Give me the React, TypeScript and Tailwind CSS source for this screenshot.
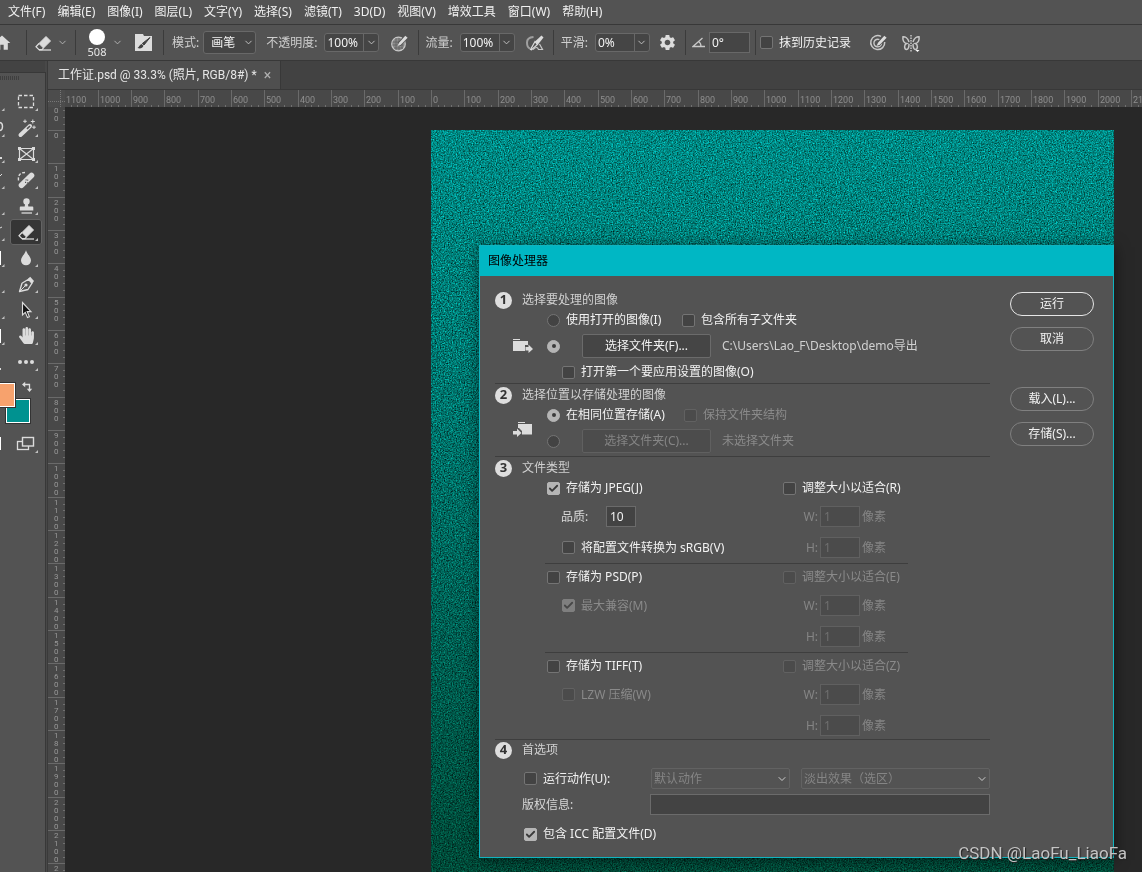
import { useState } from 'react';
import type { ReactNode } from 'react';
import { FaHandPaper } from 'react-icons/fa';
import { MdHome, MdSettings } from 'react-icons/md';
import { Check, ChevronDown } from 'lucide-react';

const menus = [
  '文件(F)',
  '编辑(E)',
  '图像(I)',
  '图层(L)',
  '文字(Y)',
  '选择(S)',
  '滤镜(T)',
  '3D(D)',
  '视图(V)',
  '增效工具',
  '窗口(W)',
  '帮助(H)',
];

/* ---------- Icons ---------- */

function EraserShape() {
  return (
    <>
      <path d="M19 6.5 23.5 11 16.5 18 12 13.5Z" fill="#dcdcdc" stroke="#dcdcdc" strokeLinejoin="round" />
      <path d="M12 13.5 9 16.8 12 19.6H15L16.5 18" fill="none" stroke="#dcdcdc" strokeWidth="1.2" />
      <path d="M12 20H24" stroke="#dcdcdc" strokeWidth="1.3" />
    </>
  );
}

interface Tool {
  name: string;
  icon: ReactNode;
  edge?: ReactNode;
}

const tools: Tool[] = [
  {
    name: '矩形选框',
    icon: <rect x="8.5" y="6.5" width="15" height="12" fill="none" stroke="#dcdcdc" strokeWidth="1.3" strokeDasharray="3.5 2" />,
  },
  {
    name: '魔棒',
    icon: (
      <>
        <path d="M10.5 20 20 11" stroke="#dcdcdc" strokeWidth="4" strokeLinecap="round" />
        <path d="M17 13.8 20 11" stroke="#535353" strokeWidth="1.6" />
        <path d="M15 4.5V8M13.2 6.3H16.8M22.8 4.5V8.5M20.8 6.5H24.8M24 10.5V14M22.2 12.2H25.8" stroke="#dcdcdc" />
      </>
    ),
    edge: <path d="M0 7.5Q2.5 8 2.5 11.5T0 15.5" fill="none" stroke="#dcdcdc" strokeWidth="1.4" />,
  },
  {
    name: '图框',
    icon: (
      <>
        <path d="M9.5 7.5H23.5V18.5H9.5ZM9.5 7.5 23.5 18.5M23.5 7.5 9.5 18.5" fill="none" stroke="#dcdcdc" strokeWidth="1.2" />
        <path d="M8 6h3v3h-3zM22 6h3v3h-3zM8 17h3v3h-3zM22 17h3v3h-3z" fill="#dcdcdc" />
      </>
    ),
    edge: <rect x="0" y="16" width="2" height="2" fill="#dcdcdc" />,
  },
  {
    name: '污点修复画笔',
    icon: (
      <>
        <path d="M8.5 13.5Q7.5 5 16 5.5" fill="none" stroke="#dcdcdc" strokeWidth="1.4" strokeDasharray="3 1.6" />
        <path d="M11.5 18.3 21.5 8.5" stroke="#dcdcdc" strokeWidth="5.6" strokeLinecap="round" />
        <path d="M15 15.4h1M17.2 13.2h1M15.6 12.8h1M16.8 15.8h1" stroke="#535353" strokeWidth="1.2" />
      </>
    ),
    edge: <path d="M0 9 2 7" stroke="#dcdcdc" />,
  },
  {
    name: '仿制图章',
    icon: (
      <>
        <circle cx="16.5" cy="8.5" r="3.2" fill="#dcdcdc" />
        <path d="M15.2 10h2.6l.5 3.5h4.2q.8 0 .8 1v3H9.8v-3q0-1 .8-1h4.1z" fill="#dcdcdc" />
        <path d="M11.5 20H22" stroke="#dcdcdc" strokeWidth="1.3" />
      </>
    ),
  },
  { name: '橡皮擦', icon: <EraserShape />, edge: <path d="M0 9 2 8" stroke="#dcdcdc" /> },
  {
    name: '模糊',
    icon: <path d="M16 5.2C17 9 21 12 21 15.5A5 4.8 0 0 1 11 15.5C11 12 15 9 16 5.2Z" fill="#dcdcdc" />,
    edge: <rect x="0" y="6" width="1" height="14" fill="#ffffff" />,
  },
  {
    name: '钢笔',
    icon: (
      <>
        <path d="M9.5 20.5 12 12.2 18.5 8.2 22 12.2 18 18.5Z" fill="none" stroke="#dcdcdc" strokeWidth="1.3" strokeLinejoin="round" />
        <path d="M18 7.8 20.2 5.8 24 10 22.3 12.4Z" fill="#dcdcdc" />
        <path d="M9.5 20.5 15.5 14.5" stroke="#dcdcdc" />
        <circle cx="16" cy="14" r="1.6" fill="#dcdcdc" />
      </>
    ),
  },
  {
    name: '路径选择',
    icon: <path d="M12.5 5.5V18L15.3 15.4 17.5 20.5 19.4 19.7 17.2 14.6H21Z" fill="#141414" stroke="#dcdcdc" strokeWidth="1.1" />,
  },
  {
    name: '抓手',
    icon: <FaHandPaper x="8" y="4" width="17" height="17" size={17} color="#dcdcdc" />,
    edge: <rect x="0" y="6" width="1" height="14" fill="#ffffff" />,
  },
  {
    name: '编辑工具栏',
    icon: (
      <>
        <circle cx="10" cy="13" r="2" fill="#dcdcdc" />
        <circle cx="16" cy="13" r="2" fill="#dcdcdc" />
        <circle cx="22" cy="13" r="2" fill="#dcdcdc" />
      </>
    ),
    edge: <rect x="0" y="19" width="1" height="2" fill="#dcdcdc" />,
  },
];

function ToolButton({ name, icon, edge, active = false, onClick }: Tool & { active?: boolean; onClick?: () => void }) {
  return (
    <div className="flex h-[26px]">
      <svg width="10" height="26" viewBox="0 0 10 26" className="shrink-0" aria-hidden="true">
        {edge}
        {name !== '编辑工具栏' && name !== '屏幕模式' && <path d="M4.5 19v3h-3z" fill="#c0c0c0" />}
      </svg>
      <button
        type="button"
        aria-label={name}
        onClick={onClick}
        className={`shrink-0 rounded-[3px] ${active ? 'bg-[#353535] ring-1 ring-[#636363] ring-inset' : ''}`}
      >
        <svg width="32" height="26" viewBox="0 0 32 26" aria-hidden="true">
          {icon}
          <path d="M28 19v3h-3z" fill="#c0c0c0" />
        </svg>
      </button>
    </div>
  );
}

function PressureIcon({ rings = false }: { rings?: boolean }) {
  return (
    <svg width="20" height="20" viewBox="0 0 20 20" fill="none" aria-hidden="true">
      {rings ? (
        <>
          <path d="M12 3.4A7 7 0 1 0 15.7 9" stroke="#c8c8c8" strokeWidth="1.5" />
          <path d="M10.5 6.7A3.8 3.8 0 1 0 12.5 10" stroke="#c8c8c8" strokeWidth="1.4" />
        </>
      ) : (
        <>
          <circle cx="8.5" cy="11" r="6.8" fill="#8b8b8b" stroke="#c8c8c8" strokeWidth="1.2" />
          <path d="M3 9h10M2.5 12h11M4 15h9M6 5v12M9 5v12M12 8v8" stroke="#606060" strokeWidth="0.8" />
        </>
      )}
      <path d="M9 11.5 16.5 3.5" stroke="#535353" strokeWidth="4.4" />
      <path d="M7.5 13 9 9.8 15.3 2.7 17.6 4.8 10.8 11.7Z" fill="#dcdcdc" />
    </svg>
  );
}

function AirbrushIcon() {
  return (
    <svg width="20" height="20" viewBox="0 0 20 20" fill="none" aria-hidden="true">
      <path d="M8.5 4Q2 4.5 2 9.5T5 15.5" stroke="#a0a0a0" strokeWidth="2" />
      <path d="M5.5 16.5 10 8.5 12.5 11.5 6.5 16.8Z" stroke="#dcdcdc" strokeWidth="1.2" />
      <path d="M10 8.5 16.5 2.5 18.5 4.5 13 11.5Z" fill="#dcdcdc" />
      <path d="M8 16.5Q12 12.5 13.5 16.5H17.5L14.5 11" stroke="#c8c8c8" strokeWidth="1.2" />
    </svg>
  );
}

function ButterflyIcon() {
  return (
    <svg width="20" height="20" viewBox="0 0 20 20" fill="none" stroke="#c8c8c8" strokeWidth="1.5" aria-hidden="true">
      <path d="M8 9C7 5 4 3.5 2 3.7 1.5 6.5 2.5 10 5.5 10.5 3 11.5 3 16 5.5 16.5 8 16.3 8 13.5 8 11" />
      <path d="M12 9C13 5 16 3.5 18 3.7 18.5 6.5 17.5 10 14.5 10.5 17 11.5 17 16 14.5 16.5 12 16.3 12 13.5 12 11" />
      <path d="M10 2V19" stroke="#ffffff" strokeWidth="1" strokeDasharray="1.5 1" />
      <path d="M14.5 17h4l-2 2z" fill="#ffffff" stroke="none" />
    </svg>
  );
}

/* ---------- Form controls ---------- */

interface ChoiceProps {
  label: string;
  type?: 'checkbox' | 'radio';
  name?: string;
  defaultChecked?: boolean;
  disabled?: boolean;
  className?: string;
}

function Choice({ label, type = 'checkbox', name, defaultChecked, disabled, className = '' }: ChoiceProps) {
  return (
    <label
      className={`flex shrink-0 items-center gap-[6px] whitespace-nowrap ${disabled ? 'text-[#8a8a8a]' : 'text-[#f2f2f2]'} ${className}`}
    >
      <span className={`grid place-items-center ${disabled ? 'opacity-45' : ''}`}>
        <input
          type={type}
          name={name}
          aria-label={label || '选择文件夹'}
          defaultChecked={defaultChecked}
          disabled={disabled}
          className={`peer col-start-1 row-start-1 size-[13px] appearance-none border border-[#747474] bg-[#434343] checked:border-[#b5b5b5] checked:bg-[#b5b5b5] ${
            type === 'radio' ? 'rounded-full' : 'rounded-[2px]'
          }`}
        />
        {type === 'radio' ? (
          <span className="pointer-events-none invisible col-start-1 row-start-1 size-1 rounded-full bg-[#3a3a3a] peer-checked:visible" />
        ) : (
          <Check
            size={11}
            strokeWidth={4}
            className="pointer-events-none invisible col-start-1 row-start-1 text-[#3a3a3a] peer-checked:visible"
          />
        )}
      </span>
      {label && <span>{label}</span>}
    </label>
  );
}

function PercentField({ label, value }: { label: string; value: string }) {
  return (
    <label className="flex items-center gap-[7px]">
      <span className="whitespace-nowrap text-[#cfcfcf]">{label}:</span>
      <span className="flex h-[19px] items-stretch rounded-[3px] border border-[#686868] bg-[#454545]">
        <input defaultValue={value} className="w-[38px] bg-transparent pl-[2px] text-[#f2f2f2] outline-none" />
        <span className="flex w-[15px] items-center justify-center border-l border-[#686868]">
          <ChevronDown size={11} className="text-[#c8c8c8]" />
        </span>
      </span>
    </label>
  );
}

function PresetSelect({ label, value, className }: { label: string; value: string; className: string }) {
  return (
    <span className={`grid items-center ${className}`}>
      <select
        aria-label={label}
        disabled
        className="col-start-1 row-start-1 h-[21px] w-full appearance-none rounded-[2px] border border-[#626262] bg-transparent pl-[2px] text-[#858585] opacity-100"
      >
        <option>{value}</option>
      </select>
      <ChevronDown size={12} className="pointer-events-none col-start-1 row-start-1 mr-[2px] justify-self-end text-[#d0d0d0]" />
    </span>
  );
}

function Divider() {
  return <span className="h-[25px] w-px shrink-0 bg-[#3b3b3b]" />;
}

/* ---------- Rulers ---------- */

// one mark per 100px of the document, 0 sits on the artwork's corner
const range = (from: number, to: number) => Array.from({ length: to - from + 1 }, (_, i) => from + i);
const columns = range(-11, 21);
const rows = range(-1, 22);
const offset = (mark: number) => Math.round((mark * 100) / 3);

function HorizontalRuler() {
  return (
    <svg className="h-[17px] w-full bg-[#484848]" aria-hidden="true">
      {columns.map((m) => {
        const x = 366 + offset(m);
        return (
          <g key={m} className="fill-[#8e8e8e]">
            <rect x={x} y="0" width="1" height="17" fill="#6a6a6a" />
            {[1, 2, 3, 4].map((t) => (
              <rect key={t} x={x + Math.round(t * 6.67)} y="15" width="1" height="2" fill="#707070" />
            ))}
            <text x={x + 2} y="13" className="font-['Roboto',sans-serif] text-[9px]">
              {Math.abs(m * 100)}
            </text>
          </g>
        );
      })}
    </svg>
  );
}

function VerticalRuler() {
  return (
    <svg className="h-full w-[17px] shrink-0 bg-[#484848]" aria-hidden="true">
      {rows.map((m) => {
        const y = 23 + offset(m);
        const digits = String(Math.abs(m * 100)).split('');
        return (
          <g key={m} className="fill-[#989898]">
            <rect x="0" y={y} width="17" height="1" fill="#6a6a6a" />
            {[1, 2, 3, 4].map((t) => (
              <rect key={t} x="15" y={y + Math.round(t * 6.67)} width="2" height="1" fill="#707070" />
            ))}
            {digits.map((digit, i) => (
              <text key={i} x="6" y={y + 8 + i * 8} className="font-['Roboto',sans-serif] text-[8px]">
                {m < 0 && i === 0 ? '' : digit}
              </text>
            ))}
          </g>
        );
      })}
    </svg>
  );
}

/* ---------- Canvas artwork ---------- */

function Artwork() {
  return (
    <svg className="absolute top-[23px] right-7 bottom-0 left-[366px] h-[calc(100%-23px)] w-[calc(100%-394px)]" aria-hidden="true">
      <defs>
        <linearGradient id="teal" x1="0" y1="0" x2="0" y2="1">
          <stop offset="0" stopColor="#008b86" />
          <stop offset="0.3" stopColor="#007a73" />
          <stop offset="1" stopColor="#004a38" />
        </linearGradient>
        <filter id="grain" x="0" y="0" width="100%" height="100%" colorInterpolationFilters="sRGB">
          <feTurbulence type="fractalNoise" baseFrequency="0.75" numOctaves="2" seed="4" />
          <feColorMatrix values="1 0 0 0 -0.01  1 0 0 0 -0.01  1 0 0 0 -0.01  0 0 0 0 1" />
        </filter>
      </defs>
      <rect width="100%" height="100%" fill="url(#teal)" />
      <rect width="100%" height="100%" filter="url(#grain)" className="mix-blend-overlay" />
    </svg>
  );
}

/* ---------- Dialog ---------- */

function StepTitle({ step, title }: { step: number; title: string }) {
  return (
    <h2 className="flex h-5 items-center gap-[10px] text-[#d0d0d0]">
      <span className="flex size-[17px] items-center justify-center rounded-full bg-[#dedede] text-[13px] font-bold text-[#333333]">
        {step}
      </span>
      {title}
    </h2>
  );
}

function FolderIcon({ direction }: { direction: 'out' | 'in' }) {
  return (
    <svg width="20" height="16" viewBox="0 0 20 16" fill="#dcdcdc" className="shrink-0" aria-hidden="true">
      {direction === 'out' ? (
        <>
          <path d="M0 1h7v1H0zM0 3h15v4h-3v6H0z" />
          <path d="M12.5 9h3V6.5l4.5 4.5-4.5 4v-2.5h-3z" />
        </>
      ) : (
        <>
          <path d="M5 1h7v1H5zM5 3h14v10.500H9V10L6 7H5z" />
          <path d="M0 10h4V7.500l4.500 4.500-4.500 4v-2.500H0z" />
        </>
      )}
    </svg>
  );
}

function SizeRow({ label, id }: { label: string; id: string }) {
  return (
    <div className="flex h-[21px] items-center gap-[2px] text-[#858585]">
      <label htmlFor={id} className="w-[35px] text-right">
        {label}:
      </label>
      <input
        id={id}
        disabled
        defaultValue="1"
        className="h-[21px] w-10 border border-[#606060] bg-[#4b4b4b] pl-[3px] text-[#707070]"
      />
      <span>像素</span>
    </div>
  );
}

interface FormatBlockProps {
  id: string;
  format: ReactNode;
  resize: string;
  resizeDisabled?: boolean;
  children: ReactNode;
  className?: string;
}

function FormatBlock({ id, format, resize, resizeDisabled, children, className = '' }: FormatBlockProps) {
  return (
    <div className={`mr-[82px] ml-[50px] flex justify-between pl-[2px] ${className}`}>
      <div>
        <div className="flex h-5 items-center">{format}</div>
        {children}
      </div>
      <div className="w-[125px]">
        <Choice label={resize} disabled={resizeDisabled} className="h-5" />
        <div className="mt-2 space-y-[10px]">
          <SizeRow label="W" id={`${id}-w`} />
          <SizeRow label="H" id={`${id}-h`} />
        </div>
      </div>
    </div>
  );
}

function PillButton({ children, primary = false }: { children: ReactNode; primary?: boolean }) {
  return (
    <button
      type="button"
      className={`h-6 w-full rounded-full border text-[#f2f2f2] ${primary ? 'border-[#e6e6e6]' : 'border-[#808080]'}`}
    >
      {children}
    </button>
  );
}

function ImageProcessorDialog() {
  return (
    <div
      role="dialog"
      aria-label="图像处理器"
      className="absolute top-[138px] right-7 left-[414px] border border-[#10b4c0] bg-[#535353] shadow-[0_2px_14px_rgba(0,0,0,0.55)]"
    >
      <div className="flex h-[30px] items-center bg-[#00b7c4] pl-2 text-black">图像处理器</div>
      <div className="flex gap-5 pr-[19px] pl-[15px]">
        <form className="min-w-0 flex-1 pt-[14px] pb-[13px]">
          <section>
            <StepTitle step={1} title="选择要处理的图像" />
            <div className="flex h-5 items-center pl-[52px]">
              <Choice type="radio" name="source" label="使用打开的图像(I)" className="w-[135px]" />
              <Choice label="包含所有子文件夹" />
            </div>
            <div className="my-1 flex h-6 items-center pl-[18px]">
              <FolderIcon direction="out" />
              <Choice type="radio" name="source" label="" defaultChecked className="ml-[14px]" />
              <button type="button" className="ml-[22px] h-6 w-[129px] rounded-[2px] border border-[#6b6b6b] bg-[#454545] text-[#f2f2f2]">
                选择文件夹(F)...
              </button>
              <span className="ml-[11px] whitespace-nowrap text-[#d0d0d0]">C:\Users\Lao_F\Desktop\demo导出</span>
            </div>
            <Choice label="打开第一个要应用设置的图像(O)" className="h-5 pl-[67px]" />
          </section>

          <section className="mt-px border-t border-[#3e3e3e] pt-px">
            <StepTitle step={2} title="选择位置以存储处理的图像" />
            <div className="flex items-center gap-[14px] pl-[18px]">
              <FolderIcon direction="in" />
              <div>
                <div className="flex h-5 items-center">
                  <Choice type="radio" name="target" label="在相同位置存储(A)" defaultChecked className="w-[137px]" />
                  <Choice label="保持文件夹结构" disabled />
                </div>
                <div className="mt-1 flex h-6 items-center">
                  <Choice type="radio" name="target" label="" />
                  <button
                    type="button"
                    disabled
                    className="ml-[22px] h-6 w-[129px] rounded-[2px] border border-[#606060] bg-[#4c4c4c] text-[#858585]"
                  >
                    选择文件夹(C)...
                  </button>
                  <span className="ml-[11px] text-[#8a8a8a]">未选择文件夹</span>
                </div>
              </div>
            </div>
          </section>

          <section className="mt-[3px] border-t border-[#3e3e3e] pt-px">
            <StepTitle step={3} title="文件类型" />
            <FormatBlock id="jpeg" format={<Choice label="存储为 JPEG(J)" defaultChecked />} resize="调整大小以适合(R)" className="pb-[5px]">
              <label className="mt-2 flex h-[21px] items-center pl-[14px] text-[#d8d8d8]">
                <span className="w-[45px]">品质:</span>
                <input defaultValue="10" className="h-[21px] w-[30px] border border-[#6b6b6b] bg-[#434343] pl-[3px] text-[#f2f2f2]" />
              </label>
              <Choice label="将配置文件转换为 sRGB(V)" className="mt-[10px] h-[21px] pl-[15px]" />
            </FormatBlock>
            <FormatBlock
              id="psd"
              format={<Choice label="存储为 PSD(P)" />}
              resize="调整大小以适合(E)"
              resizeDisabled
              className="border-t border-[#3e3e3e] pt-[3px] pb-[5px]"
            >
              <Choice label="最大兼容(M)" defaultChecked disabled className="mt-2 h-[21px] pl-[15px]" />
            </FormatBlock>
            <FormatBlock
              id="tiff"
              format={<Choice label="存储为 TIFF(T)" />}
              resize="调整大小以适合(Z)"
              resizeDisabled
              className="border-t border-[#3e3e3e] pt-[3px] pb-[3px]"
            >
              <Choice label="LZW 压缩(W)" disabled className="mt-2 h-[21px] pl-[15px]" />
            </FormatBlock>
          </section>

          <section className="border-t border-[#3e3e3e]">
            <StepTitle step={4} title="首选项" />
            <div className="mt-2 flex h-[21px] items-center pl-[29px]">
              <Choice label="运行动作(U):" className="w-[127px]" />
              <PresetSelect label="动作组" value="默认动作" className="w-[139px]" />
              <PresetSelect label="动作" value="淡出效果（选区）" className="ml-[11px] flex-1" />
            </div>
            <label className="mt-[5px] flex h-[21px] items-center pl-[27px] text-[#d8d8d8]">
              <span className="w-[128px]">版权信息:</span>
              <input className="h-[21px] min-w-0 flex-1 border border-[#6b6b6b] bg-[#434343] px-1" />
            </label>
            <Choice label="包含 ICC 配置文件(D)" defaultChecked className="mt-[9px] h-5 pl-[29px]" />
          </section>
        </form>

        <div className="flex w-[84px] shrink-0 flex-col gap-[11px] pt-4">
          <PillButton primary>运行</PillButton>
          <PillButton>取消</PillButton>
          <div className="mt-[25px] flex flex-col gap-[11px]">
            <PillButton>载入(L)...</PillButton>
            <PillButton>存储(S)...</PillButton>
          </div>
        </div>
      </div>
    </div>
  );
}

/* ---------- Application frame ---------- */

function OptionsBar() {
  return (
    <div className="flex h-9 shrink-0 items-center border-b border-[#383838] whitespace-nowrap">
      <button type="button" aria-label="主页" className="flex w-[26px] shrink-0 overflow-hidden">
        <MdHome size={20} className="-ml-2 text-[#dcdcdc]" />
      </button>
      <Divider />
      <button type="button" aria-label="橡皮擦预设" className="ml-1 flex items-center">
        <svg width="26" height="26" viewBox="4 0 26 26" aria-hidden="true">
          <EraserShape />
        </svg>
        <ChevronDown size={11} className="text-[#b8b8b8]" />
      </button>
      <span className="ml-[7px] flex">
        <Divider />
      </span>
      <button type="button" aria-label="画笔大小" className="ml-[13px] flex items-center">
        <span className="flex w-4 flex-col items-center pt-[2px] text-[11px] leading-[14px] text-[#e6e6e6]">
          <span className="size-4 rounded-full bg-white" />
          508
        </span>
        <ChevronDown size={11} className="ml-[7px] text-[#b8b8b8]" />
      </button>
      <button type="button" aria-label="画笔设置" className="ml-3">
        <svg width="17" height="17" viewBox="0 0 17 17" aria-hidden="true">
          <path d="M0 0h8l1 2h8v15H0z" fill="#dcdcdc" />
          <path d="M15 3.5 9 11 7.3 9.5Z" fill="#404040" stroke="#404040" strokeLinejoin="round" />
          <path d="M6.5 10 8.5 11.7C7.5 14.5 5 14.8 2.5 14 4.5 13 4 11 6.5 10Z" fill="#404040" />
        </svg>
      </button>
      <span className="ml-[11px] flex">
        <Divider />
      </span>
      <label className="ml-2 flex items-center gap-1">
        <span className="text-[#cfcfcf]">模式:</span>
        <span className="grid w-[53px] items-center">
          <select
            defaultValue="画笔"
            className="col-start-1 row-start-1 h-[23px] w-full appearance-none rounded-[3px] border border-[#686868] bg-[#454545] pl-[7px] text-[#f2f2f2]"
          >
            <option>画笔</option>
            <option>铅笔</option>
            <option>块</option>
          </select>
          <ChevronDown size={11} className="pointer-events-none col-start-1 row-start-1 mr-[2px] justify-self-end text-[#c8c8c8]" />
        </span>
      </label>
      <div className="ml-[10px] flex">
        <PercentField label="不透明度" value="100%" />
      </div>
      <button type="button" aria-label="不透明度压力" className="ml-[11px]">
        <PressureIcon />
      </button>
      <span className="ml-2 flex">
        <Divider />
      </span>
      <div className="ml-[6px] flex">
        <PercentField label="流量" value="100%" />
      </div>
      <button type="button" aria-label="喷枪" className="ml-[10px]">
        <AirbrushIcon />
      </button>
      <span className="ml-2 flex">
        <Divider />
      </span>
      <div className="ml-[7px] flex">
        <PercentField label="平滑" value="0%" />
      </div>
      <button type="button" aria-label="平滑选项" className="ml-2">
        <MdSettings size={19} className="text-[#dcdcdc]" />
      </button>
      <span className="ml-2 flex">
        <Divider />
      </span>
      <label className="ml-[6px] flex items-center gap-1">
        <svg width="13" height="12" viewBox="0 0 13 12" fill="none" stroke="#c8c8c8" strokeWidth="1.3" aria-label="角度">
          <path d="M10.5 1 1 9.5H13M6.5 4.5Q9 6 9 9.5" />
        </svg>
        <input defaultValue="0°" className="h-[21px] w-[41px] border border-[#686868] bg-[#454545] pl-[2px] text-[#f2f2f2]" />
      </label>
      <span className="ml-[5px] flex">
        <Divider />
      </span>
      <Choice label="抹到历史记录" className="ml-1" />
      <button type="button" aria-label="大小压力" className="ml-[18px]">
        <PressureIcon rings />
      </button>
      <button type="button" aria-label="对称" className="ml-3">
        <ButterflyIcon />
      </button>
    </div>
  );
}

function Toolbar({ active, onSelect }: { active: string; onSelect: (name: string) => void }) {
  return (
    <div className="flex w-12 shrink-0 flex-col border-r border-[#3a3a3a] bg-[#484848]">
      <div className="h-[11px] w-[45px] bg-[#434343]" />
      <div className="w-[46px] flex-1 overflow-hidden border-t border-r border-[#383838] bg-[#535353]">
        <div className="mt-[3px] mb-[9px] h-1 w-5 bg-[repeating-linear-gradient(90deg,#3f3f3f_0_1px,transparent_1px_2px)]" />
        {tools.map((tool) => (
          <ToolButton key={tool.name} {...tool} active={tool.name === active} onClick={() => onSelect(tool.name)} />
        ))}
        <div className="relative h-14">
          <button
            type="button"
            aria-label="背景色"
            className="absolute top-6 left-[6px] size-6 border border-white bg-[#009290] outline outline-1 outline-[#333333]"
          />
          <button
            type="button"
            aria-label="前景色"
            className="absolute top-2 -left-[9px] size-6 border border-white bg-[#f7a26d] outline outline-1 outline-[#333333]"
          />
          <svg className="absolute top-[6px] left-[21px]" width="12" height="12" viewBox="0 0 12 12" fill="none" aria-hidden="true">
            <path d="M3 3.5H8.5V9" stroke="#dcdcdc" strokeWidth="1.3" />
            <path d="M4.2.8V6.2L1 3.5ZM5.8 7.8H11.2L8.5 11Z" fill="#dcdcdc" />
          </svg>
        </div>
        <ToolButton
          name="屏幕模式"
          edge={<rect x="0" y="6" width="1" height="13" fill="#ffffff" />}
          icon={
            <>
              <rect x="7.5" y="10.5" width="11" height="8" fill="none" stroke="#dcdcdc" strokeWidth="1.3" />
              <rect x="12.5" y="6.5" width="11" height="8.5" fill="#535353" stroke="#dcdcdc" strokeWidth="1.4" />
            </>
          }
        />
      </div>
    </div>
  );
}

export default function App() {
  const [activeTool, setActiveTool] = useState('橡皮擦');

  return (
    <div className="relative flex h-screen flex-col overflow-hidden bg-[#535353] font-['Noto_Sans','Noto_Sans_CJK_SC',sans-serif] text-xs text-[#e6e6e6]">
      {/* Menu bar */}
      <nav className="flex h-[25px] shrink-0 items-center gap-3 border-b border-[#383838] pl-2 whitespace-nowrap">
        {menus.map((menu) => (
          <button key={menu} type="button" className="text-[#f0f0f0]">
            {menu}
          </button>
        ))}
      </nav>

      <OptionsBar />

      <div className="flex min-h-0 flex-1">
        <Toolbar active={activeTool} onSelect={setActiveTool} />

        <div className="flex min-w-0 flex-1 flex-col">
          {/* Document tabs */}
          <div className="flex h-[29px] shrink-0 border-b border-[#383838] bg-[#424242]">
            <div className="flex items-center gap-[7px] border-r border-[#383838] bg-[#4f4f4f] pr-[9px] pl-[10px] font-['Roboto','Noto_Sans_CJK_SC',sans-serif] whitespace-nowrap">
              <span>工作证.psd @ 33.3% (照片, RGB/8#) *</span>
              <button type="button" aria-label="关闭" className="text-sm text-[#b0b0b0]">
                ×
              </button>
            </div>
          </div>

          {/* Rulers and canvas */}
          <div className="flex h-[17px] shrink-0">
            <svg width="17" height="17" className="shrink-0 bg-[#4c4c4c]" aria-hidden="true">
              <path d="M12.5 0V17M0 11.5H17" stroke="#777777" strokeDasharray="1 1" />
            </svg>
            <HorizontalRuler />
          </div>
          <div className="flex min-h-0 flex-1">
            <VerticalRuler />
            <main className="relative min-w-0 flex-1 bg-[#282828]">
              <Artwork />
              <ImageProcessorDialog />
            </main>
          </div>
        </div>
      </div>

      <p className="absolute right-[15px] bottom-[7px] font-['Roboto',sans-serif] text-[17px] leading-6 text-[#c4c4c4] [text-shadow:1px_1px_1px_#222222]">
        CSDN @LaoFu_LiaoFa
      </p>
    </div>
  );
}
